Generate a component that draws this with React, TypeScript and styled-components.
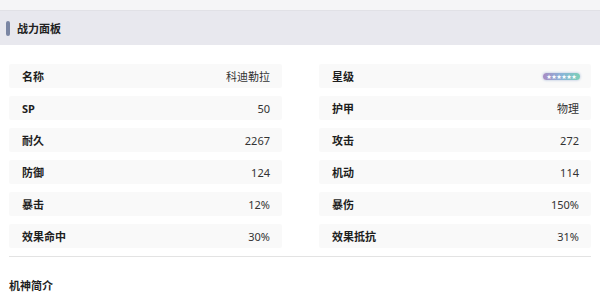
import React from 'react';
import styled, { createGlobalStyle } from 'styled-components';

type Stat = { label: string; value?: string; stars?: boolean };

const leftStats: Stat[] = [
  { label: '名称', value: '科迪勒拉' },
  { label: 'SP', value: '50' },
  { label: '耐久', value: '2267' },
  { label: '防御', value: '124' },
  { label: '暴击', value: '12%' },
  { label: '效果命中', value: '30%' },
];

const rightStats: Stat[] = [
  { label: '星级', stars: true },
  { label: '护甲', value: '物理' },
  { label: '攻击', value: '272' },
  { label: '机动', value: '114' },
  { label: '暴伤', value: '150%' },
  { label: '效果抵抗', value: '31%' },
];

const App: React.FC = () => {
  const rows = leftStats.flatMap((s, i) => [s, rightStats[i]]);
  return (
    <>
      <GlobalStyle />
      <Page>
        <TopStrip />
        <PanelHeader>
          <AccentBar />
          <PanelTitle>战力面板</PanelTitle>
        </PanelHeader>
        <Content>
          <StatGrid>
            {rows.map((s) => (
              <StatRow key={s.label}>
                <StatLabel>{s.label}</StatLabel>
                {s.stars ? (
                  <StarBadge>
                    {'★★★★★★'.split('').map((c, i) => (
                      <span key={i}>{c}</span>
                    ))}
                  </StarBadge>
                ) : (
                  <StatValue>{s.value}</StatValue>
                )}
              </StatRow>
            ))}
          </StatGrid>
          <Divider />
          <SectionTitle>机神简介</SectionTitle>
        </Content>
      </Page>
    </>
  );
};

const GlobalStyle = createGlobalStyle`
  body {
    margin: 0;
    background: #ffffff;
    font-family: "Noto Sans", "Noto Sans CJK SC", sans-serif;
    color: #222;
  }
`;

const Page = styled.div`
  width: 600px;
  height: 300px;
  overflow: hidden;
`;

const TopStrip = styled.div`
  height: 10px;
  background: #f5f5f7;
  border-bottom: 1px solid #e1e1e6;
`;

const PanelHeader = styled.div`
  display: flex;
  align-items: center;
  gap: 7px;
  height: 34px;
  padding-left: 6px;
  background: #e8e8ee;
`;

const AccentBar = styled.div`
  width: 4px;
  height: 15px;
  border-radius: 2px;
  background: #7b86a3;
`;

const PanelTitle = styled.div`
  font-size: 11px;
  font-weight: 700;
  color: #222;
`;

const Content = styled.div`
  padding: 19px 9px 0 9px;
`;

const StatGrid = styled.div`
  display: grid;
  grid-template-columns: 273px 272px;
  column-gap: 37px;
  row-gap: 8px;
`;

const StatRow = styled.div`
  display: flex;
  align-items: center;
  justify-content: space-between;
  height: 24px;
  padding: 0 12px 0 13px;
  background: #f9f9f9;
  border-radius: 2px;
`;

const StatLabel = styled.span`
  font-size: 11px;
  font-weight: 700;
  color: #1e1e1e;
`;

const StatValue = styled.span`
  font-size: 11px;
  color: #333;
`;

const StarBadge = styled.span`
  display: flex;
  align-items: center;
  justify-content: center;
  width: 37px;
  height: 7px;
  margin-right: -1px;
  border-radius: 4px;
  background: linear-gradient(90deg, #a98cc4, #8ab4d8 50%, #7ccfb8);
  box-shadow: 0 0 2px 1px #d4dcea;
  span {
    font-size: 5px;
    line-height: 5px;
    color: #fff;
  }
`;

const Divider = styled.div`
  height: 1px;
  margin-top: 8px;
  background: #e3e3e3;
`;

const SectionTitle = styled.div`
  margin-top: 20px;
  font-size: 11px;
  font-weight: 700;
  color: #1e1e1e;
`;

export default App;
